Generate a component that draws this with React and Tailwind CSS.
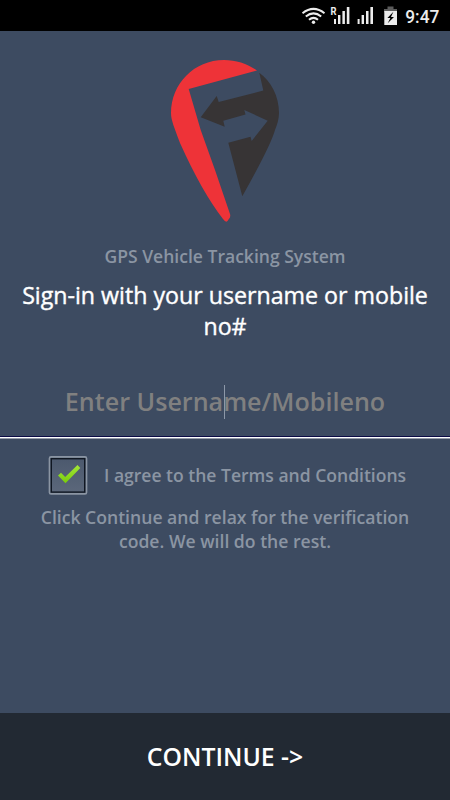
import React from "react";

function StatusBar() {
  return (
    <header className="h-[31px] shrink-0 bg-black">
      <svg width="450" height="31" viewBox="0 0 450 31" aria-hidden="true">
        <g fill="none" stroke="#ececec" strokeWidth="2">
          <path d="M302.5 13.2Q313.5 4.5 324.5 13.2" />
          <path d="M305.8 16.6Q313.5 10.2 321.2 16.6" />
          <path d="M309 19.8Q313.5 16 318 19.8" />
        </g>
        <circle cx="313.5" cy="22.3" r="1.7" fill="#ececec" />
        <text x="330.5" y="15" fontSize="10.5" fontWeight="700" fill="#ececec" fontFamily="Roboto, sans-serif" textLength="6" lengthAdjust="spacingAndGlyphs">R</text>
        <g fill="#ececec">
          <rect x="334" y="19" width="2" height="5" />
          <rect x="338" y="15" width="2.4" height="9" />
          <rect x="342.4" y="11" width="2.5" height="13" />
          <rect x="346.8" y="7" width="2.6" height="17" />
          <rect x="357.6" y="19" width="2" height="5" />
          <rect x="361.6" y="15" width="2.4" height="9" />
          <rect x="366" y="11" width="2.5" height="13" />
          <rect x="370.4" y="7" width="2.6" height="17" />
        </g>
        <path d="M387.5 6.5h6V9H397v3.2h-13V9h3.5z" fill="#5c5c5c" />
        <rect x="384.3" y="11" width="12.7" height="14" fill="#ececec" />
        <path d="M393.4 11.7l-6 6.4h3l-2.7 5.2 6.3-6.3h-3z" fill="#000" />
        <text x="405.3" y="22.6" fontSize="17.5" fontWeight="500" fill="#ececec" fontFamily="Roboto, sans-serif" textLength="34" lengthAdjust="spacingAndGlyphs">9:47</text>
      </svg>
    </header>
  );
}

function Logo() {
  return (
    <svg className="mx-auto mt-[25px] block shrink-0" width="114" height="170" viewBox="168 56 114 170" aria-hidden="true">
      <path d="M257 70.5C248 64 236 60 224 60C194 60 171 84 171 113C171 120 174 127 180 143Q202 192 223 219Q226.7 224 228.5 219.5Q231 217 230 214L215 170L200.7 130L188.7 89Z" fill="#ee3338" />
      <path d="M259.3 72.7C271 81 279 96 279 113C279 119 277 125 275 130Q271 145 242.3 196.3L228.3 142.7L250.5 136.7L251.7 141L267.7 120.7L244.3 110L245.5 114.5L223.3 120.7L224.7 126.7L200.7 117.3L216.7 96L218.7 102L263.3 90.5Z" fill="#373435" />
    </svg>
  );
}

export default function App() {
  return (
    <div className="flex h-[800px] w-[450px] flex-col overflow-hidden bg-[#3d4b61] font-['Open_Sans',sans-serif] font-semibold text-[#8b95a3]">
      <StatusBar />
      <main className="flex flex-1 flex-col text-center">
        <Logo />
        <p className="mt-[18px] h-6 text-[17.55px] leading-6 whitespace-nowrap">GPS Vehicle Tracking System</p>
        <h1 className="mt-[12px] text-[23.2px] leading-[31px] font-normal whitespace-nowrap text-white [-webkit-text-stroke:0.4px_currentColor]">
          Sign-in with your username or mobile<br />no#
        </h1>
        <div className="relative mt-[41px] flex h-[53px] items-start justify-center text-[25.1px] leading-9 whitespace-nowrap text-[#808080]">
          <span>Enter Username/Mobileno</span>
          <span className="absolute top-[2px] left-[224px] h-[34px] w-px bg-[#8d98a8]" />
        </div>
        <div className="h-[3px] border-t border-b border-t-[#0b0b45] border-b-[#989eaa] bg-white" />
        <label className="mt-[16px] ml-[48px] flex h-[40px] items-center gap-4">
          <svg width="40" height="40" viewBox="0 0 40 40" aria-hidden="true">
            <defs>
              <linearGradient id="box" x2="0" y2="1"><stop stopColor="#4b586d" /><stop offset="1" stopColor="#5c687b" /></linearGradient>
              <linearGradient id="tick" x2="0" y2="1"><stop stopColor="#a4e637" /><stop offset="1" stopColor="#78cc0b" /></linearGradient>
            </defs>
            <rect x="1.5" y="1.9" width="37" height="37" rx="1.5" fill="url(#box)" stroke="#8b95a3" strokeWidth="1.7" />
            <rect x="3.3" y="3.7" width="33.4" height="33.4" fill="none" stroke="#101722" strokeWidth="1.4" />
            <path d="M10 20.5l3-2.8 4.2 4.2L29.5 10l2.8 3-14.8 15.2z" fill="url(#tick)" />
          </svg>
          <span className="text-[17.55px] whitespace-nowrap">I agree to the Terms and Conditions</span>
        </label>
        <p className="mt-[11px] text-[17.6px] leading-[23.5px] whitespace-nowrap">
          Click Continue and relax for the verification<br />code. We will do the rest.
        </p>
      </main>
      <button className="h-[87px] shrink-0 bg-[#222933] pb-[2px] text-[24.8px] leading-9 text-white">CONTINUE -&gt;</button>
    </div>
  );
}
